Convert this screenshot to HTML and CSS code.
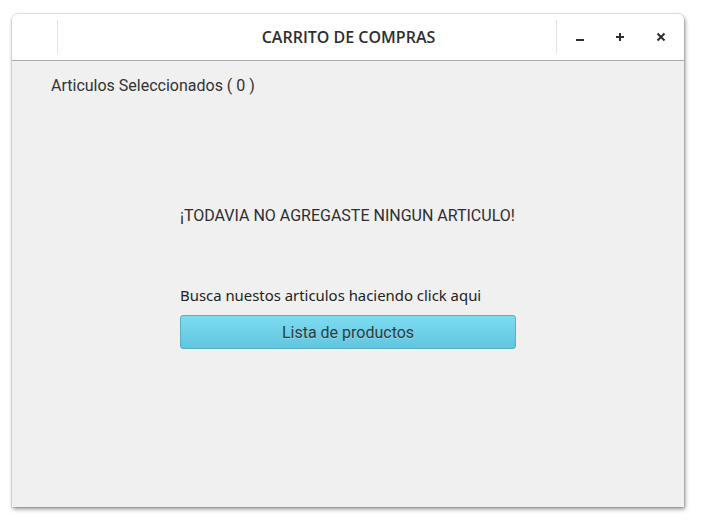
FILE: index.html
```html
<!DOCTYPE html>
<html lang="es">
<head>
<meta charset="utf-8">
<title>Carrito de compras</title>
<link rel="stylesheet" href="styles.css">
</head>
<body>
<div class="window">
  <header class="titlebar">
    <div class="tb-left"><span class="sep"></span></div>
    <div class="tb-title">CARRITO DE COMPRAS</div>
    <div class="tb-right">
      <span class="sep"></span>
      <div class="controls">
        <button class="ctl" aria-label="Minimizar">
          <svg width="10" height="10" viewBox="0 0 10 10"><rect x="1" y="7" width="8" height="2" fill="#2e2e2e"/></svg>
        </button>
        <button class="ctl" aria-label="Maximizar">
          <svg width="10" height="10" viewBox="0 0 10 10"><rect x="1" y="4" width="8" height="2" fill="#2e2e2e"/><rect x="4" y="1" width="2" height="8" fill="#2e2e2e"/></svg>
        </button>
        <button class="ctl" aria-label="Cerrar">
          <svg width="10" height="10" viewBox="0 0 10 10"><path d="M1.5 1.5 L8.5 8.5 M8.5 1.5 L1.5 8.5" stroke="#2e2e2e" stroke-width="2"/></svg>
        </button>
      </div>
    </div>
  </header>
  <main class="content">
    <div class="count">Articulos Seleccionados ( 0 )</div>
    <section class="center">
      <h1 class="empty">¡TODAVIA NO AGREGASTE NINGUN ARTICULO!</h1>
      <p class="hint">Busca nuestos articulos haciendo click aqui</p>
      <button class="btn">Lista de productos</button>
    </section>
  </main>
</div>
</body>
</html>
```

FILE: styles.css
```css
html, body {
  margin: 0;
  padding: 0;
  background: #ffffff;
}
body {
  padding: 14px 0 17px 12px;
  min-height: 524px;
  box-sizing: border-box;
  font-family: Roboto, "Liberation Sans", sans-serif;
}
.window {
  width: 672px;
  height: 493px;
  display: flex;
  flex-direction: column;
  border-radius: 6px 6px 0 0;
  box-shadow: 0 0 0 1px rgba(0,0,0,0.08), 1px 2px 4px rgba(0,0,0,0.45);
  overflow: hidden;
  background: #f0f0f0;
}
.titlebar {
  height: 46px;
  flex: none;
  display: grid;
  grid-template-columns: 1fr auto 1fr;
  background: #ffffff;
  border-bottom: 1px solid #a9a9a9;
}
.tb-left {
  width: 46px;
  display: flex;
  justify-content: flex-end;
  align-items: center;
}
.sep {
  width: 1px;
  height: 34px;
  background: #e3e3e3;
}
.tb-title {
  display: flex;
  align-items: center;
  justify-content: center;
  font-family: "Open Sans", sans-serif;
  font-weight: 600;
  font-size: 16px;
  color: #2e2e2e;
  padding-left: 1px;
}
.tb-right {
  justify-self: end;
  width: 128px;
  display: flex;
  align-items: center;
}
.controls {
  flex: 1;
  display: flex;
  justify-content: space-around;
  align-items: center;
  padding: 0 3px 0 3px;
}
.ctl {
  border: 0;
  background: transparent;
  padding: 0;
  width: 20px;
  height: 20px;
  display: flex;
  align-items: center;
  justify-content: center;
}
.content {
  flex: 1;
  padding: 15px 0 0 39px;
}
.count {
  font-size: 16px;
  line-height: 19px;
  color: #333333;
}
.center {
  width: 336px;
  margin: 112px 0 0 129px;
}
.empty {
  margin: 0;
  font-size: 16px;
  font-weight: 400;
  line-height: 18px;
  color: #2e2e2e;
}
.hint {
  margin: 61px 0 0;
  font-family: "Noto Sans", sans-serif;
  font-size: 14.9px;
  line-height: 18px;
  color: #222222;
}
.btn {
  display: block;
  margin-top: 11px;
  width: 336px;
  height: 34px;
  border: 1px solid #5aaec6;
  border-radius: 3px;
  background: linear-gradient(#7cdcf1, #62c5df);
  font-family: Roboto, sans-serif;
  font-size: 16px;
  color: #2f3a3e;
  text-shadow: 0 1px 0 rgba(255,255,255,0.25);
  padding: 0;
}
```
